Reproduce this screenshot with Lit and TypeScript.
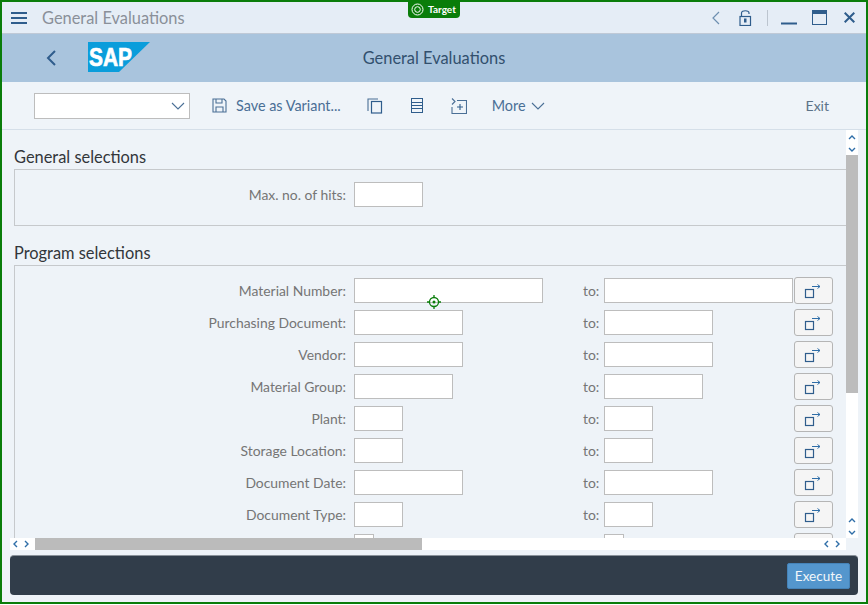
import { LitElement, html, css, svg } from "lit";
import { customElement } from "lit/decorators.js";

type FieldRow = { label: string; width: number };

const rows: FieldRow[] = [
  { label: "Material Number:", width: 189 },
  { label: "Purchasing Document:", width: 109 },
  { label: "Vendor:", width: 109 },
  { label: "Material Group:", width: 99 },
  { label: "Plant:", width: 49 },
  { label: "Storage Location:", width: 49 },
  { label: "Document Date:", width: 109 },
  { label: "Document Type:", width: 49 },
  { label: "", width: 20 },
];

const chevron = (d: string, color: string, w = 1.4) => svg`<path d=${d} fill="none" stroke=${color} stroke-width=${w} />`;

@customElement("app-root")
export class AppRoot extends LitElement {
  static styles = css`
    :host {
      display: block;
      width: 868px;
      height: 605px;
      position: relative;
      overflow: hidden;
      font-family: Lato, "Noto Sans", sans-serif;
      background: #fff;
    }
    svg {
      display: block;
    }
    .window {
      box-sizing: border-box;
      height: 604px;
      border: 2px solid #0a7d0a;
      display: flex;
      flex-direction: column;
      background: #eef3f8;
    }
    .titlebar {
      height: 31px;
      flex: none;
      display: flex;
      align-items: center;
      background: #e5edf6;
      border-bottom: 1px solid #bfc9d6;
      padding: 0 11px 0 9px;
    }
    .titlebar .name {
      margin: -1px 0 0 15px;
      font-size: 16.4px;
      color: #8a9099;
      flex: 1;
    }
    .winbtns {
      display: flex;
      align-items: center;
    }
    .sep {
      width: 1px;
      height: 16px;
      background: #bcc5cf;
    }
    .header {
      height: 48px;
      flex: none;
      background: #a9c4dd;
      display: grid;
      grid-template-columns: 1fr auto 1fr;
      align-items: center;
    }
    .header .left {
      display: flex;
      align-items: center;
      padding-left: 43px;
      gap: 31px;
    }
    .header .logo {
      margin-top: -2px;
    }
    .header .title {
      margin-top: -1px;
      font-size: 16.4px;
      color: #32506e;
    }
    .toolbar {
      height: 48px;
      flex: none;
      box-sizing: border-box;
      background: #eff4f9;
      border-bottom: 1px solid #d5dfe9;
      display: flex;
      align-items: center;
      padding: 0 37px 0 32px;
      font-size: 14.4px;
      color: #4a6f96;
    }
    .toolbar .exit {
      font-size: 14px;
      color: #5b7288;
    }
    .select {
      box-sizing: border-box;
      width: 156px;
      height: 26px;
      background: #fff;
      border: 1px solid #bdbdbd;
      display: flex;
      justify-content: flex-end;
      align-items: center;
      padding-right: 3px;
      margin-right: 22px;
    }
    .tool {
      display: flex;
      align-items: center;
      gap: 9px;
    }
    .tool.more {
      margin-left: 25px;
      gap: 5px;
    }
    .spacer {
      flex: 1;
    }
    .middle {
      flex: 1;
      min-height: 0;
      display: flex;
      padding-right: 8px;
    }
    .content {
      flex: 1;
      min-width: 0;
      overflow: hidden;
      padding-left: 12px;
      color: #757575;
      font-size: 13.9px;
    }
    .group-title {
      font-size: 16.4px;
      color: #32363a;
      height: 20px;
      line-height: 20px;
      margin: 17px 0 2px;
    }
    .box {
      border-top: 1px solid #c6c9cc;
      border-left: 1px solid #c6c9cc;
    }
    .box.general {
      height: 43px;
      border-bottom: 1px solid #c6c9cc;
      padding-top: 12px;
    }
    .box.program {
      padding-top: 12px;
    }
    .row {
      display: grid;
      grid-template-columns: 339px 229px 21px 190px 39px;
      align-items: start;
      height: 32px;
      line-height: 25px;
    }
    .label {
      text-align: right;
      padding-right: 8px;
    }
    .input {
      box-sizing: border-box;
      height: 25px;
      background: #fff;
      border: 1px solid #bdbdbd;
    }
    .more-btn {
      box-sizing: border-box;
      width: 39px;
      height: 27px;
      margin-top: -1px;
      background: #f5f5f5;
      border: 1px solid #b5b5b5;
      border-radius: 3px;
      display: flex;
      align-items: center;
      justify-content: center;
    }
    .vbar {
      width: 12px;
      flex: none;
      background: #fff;
      display: flex;
      flex-direction: column;
      align-items: center;
    }
    .vbar .arrows {
      height: 25px;
      flex: none;
      display: flex;
      align-items: center;
    }
    .vbar .thumb {
      width: 12px;
      height: 238px;
      flex: none;
      background: #bcbcbc;
    }
    .vbar .fill {
      flex: 1;
    }
    .hrow {
      height: 12px;
      flex: none;
      margin: 0 20px 0 8px;
      background: #fff;
      display: flex;
      align-items: center;
    }
    .hrow .thumb {
      width: 387px;
      height: 12px;
      background: #bbbbbb;
    }
    .hrow .arrows {
      width: 25px;
      flex: none;
    }
    .hrow .fill {
      flex: 1;
    }
    .footer {
      box-sizing: border-box;
      height: 40px;
      flex: none;
      margin: 5px 8px 7px 8px;
      background: #313d4a;
      border-radius: 4px;
      border-top: 1px solid #8a929a;
      display: flex;
      justify-content: flex-end;
      align-items: center;
      padding-right: 8px;
    }
    .execute {
      box-sizing: border-box;
      width: 63px;
      height: 26px;
      background: #5496cd;
      border: 1px solid #4583b8;
      border-radius: 2px;
      color: #f2f6fa;
      font-size: 13.5px;
      display: flex;
      align-items: center;
      justify-content: center;
    }
    .badge {
      position: absolute;
      left: 408px;
      top: 0;
      width: 52px;
      height: 18px;
      background: #0a7d0a;
      border-radius: 0 0 4px 4px;
      color: #fff;
      font-size: 10px;
      font-weight: 700;
      display: flex;
      align-items: center;
      gap: 4px;
      padding-left: 3px;
      box-sizing: border-box;
    }
    .cursor {
      position: absolute;
      left: 427px;
      top: 295px;
    }
  `;

  private arrowIcon() {
    return html`<svg width="21" height="17" viewBox="0 0 21 17">
      <rect x="2.5" y="7.5" width="8" height="8" fill="none" stroke="#2f5d8c" stroke-width="1.2" />
      <path d="M9 4.5H17M14.5 2.5L17 4.5L14.5 6.5" fill="none" stroke="#2f6ea8" stroke-width="1" />
    </svg>`;
  }

  private renderRow(r: FieldRow) {
    const w = `width:${r.width}px`;
    return html`<div class="row">
      <div class="label">${r.label}</div>
      <div class="input" style=${w}></div>
      <div>${r.label ? "to:" : ""}</div>
      <div class="input" style=${w}></div>
      <div class="more-btn">${this.arrowIcon()}</div>
    </div>`;
  }

  render() {
    return html`
      <div class="window">
        <div class="titlebar">
          <svg width="16" height="14" viewBox="0 0 16 14">
            <path d="M0 2H16M0 7H16M0 12H16" stroke="#2f5d8c" stroke-width="1.8" />
          </svg>
          <div class="name">General Evaluations</div>
          <div class="winbtns">
            <svg width="10" height="14" viewBox="0 0 10 14" style="margin-right:18px">
              ${chevron("M8 1L2 7L8 13", "#6d8fb0", 1.2)}
            </svg>
            <svg width="13" height="16" viewBox="0 0 13 16" style="margin-right:15px">
              <rect x="1" y="6.5" width="10.5" height="9" fill="none" stroke="#2f5d8c" stroke-width="1.2" />
              <path d="M2.5 6.5V3C2.5 0 10 0 10 3V4" fill="none" stroke="#2f5d8c" stroke-width="1.2" />
              <rect x="5" y="8.5" width="2.5" height="4" fill="#2f5d8c" />
            </svg>
            <div class="sep"></div>
            <svg width="16" height="14" viewBox="0 0 16 14" style="margin:0 15px 0 13px">
              <path d="M0 12.5H16" stroke="#2f5d8c" stroke-width="2" />
            </svg>
            <svg width="15" height="15" viewBox="0 0 15 15" style="margin-right:17px">
              <rect x="0.5" y="0.5" width="14" height="14" fill="none" stroke="#2f5d8c" />
              <rect x="0" y="0" width="15" height="4" fill="#2f5d8c" />
            </svg>
            <svg width="11" height="11" viewBox="0 0 11 11">
              <path d="M0.7 0.7L10.3 10.3M10.3 0.7L0.7 10.3" stroke="#2f5d8c" stroke-width="2" />
            </svg>
          </div>
        </div>

        <div class="header">
          <div class="left">
            <svg width="12" height="18" viewBox="0 0 12 18">
              ${chevron("M10 2L3 9L10 16", "#2f5d8c", 2)}
            </svg>
            <svg class="logo" width="62" height="30" viewBox="0 0 62 30">
              <polygon points="0,0 62,0 31,30 0,30" fill="#0a9ddb" />
              <text
                x="1"
                y="24"
                font-family="Liberation Sans"
                font-weight="700"
                font-size="26"
                textLength="43"
                lengthAdjust="spacingAndGlyphs"
                fill="#fff"
                stroke="#fff"
                stroke-width="0.7"
              >SAP</text>
            </svg>
          </div>
          <div class="title">General Evaluations</div>
          <div></div>
        </div>

        <div class="toolbar">
          <div class="select">
            <svg width="16" height="10" viewBox="0 0 16 10">
              ${chevron("M2 2L8 8L14 2", "#4a6f96", 1.1)}
            </svg>
          </div>
          <div class="tool">
            <svg width="15" height="15" viewBox="0 0 15 15">
              <path d="M1 1H12L14 3V14H1Z M4 1V5H10V1 M4 14V9H11V14" fill="none" stroke="#4a6f96" stroke-width="1.1" />
            </svg>
            <span>Save as Variant...</span>
          </div>
          <svg width="16" height="16" viewBox="0 0 16 16" style="margin-left:26px">
            <path d="M11 1H1V13" fill="none" stroke="#4a6f96" stroke-width="1.1" />
            <rect x="4.5" y="3.5" width="10" height="11.5" fill="none" stroke="#2f5d8c" stroke-width="1.2" />
          </svg>
          <svg width="12" height="15" viewBox="0 0 12 15" style="margin-left:28px">
            <rect x="0.5" y="0.5" width="11" height="14" fill="none" stroke="#2f5d8c" />
            <path d="M0 4.5H12M0 7.5H12M0 10.5H12" stroke="#2f5d8c" />
          </svg>
          <svg width="16" height="16" viewBox="0 0 16 16" style="margin-left:28px">
            <path d="M1 0.5L4 3.5L1 6.5 M6 2.5H15.5V15.5H1V9" fill="none" stroke="#4a6f96" stroke-width="1.1" />
            <path d="M6 9H12M9 6V12" stroke="#2f5d8c" stroke-width="1.1" />
          </svg>
          <div class="tool more">
            <span>More</span>
            <svg width="14" height="8" viewBox="0 0 14 8">
              ${chevron("M1 1L7 7L13 1", "#4a6f96", 1.1)}
            </svg>
          </div>
          <div class="spacer"></div>
          <span class="exit">Exit</span>
        </div>

        <div class="middle">
          <div class="content">
            <div class="group-title">General selections</div>
            <div class="box general">
              <div class="row">
                <div class="label">Max. no. of hits:</div>
                <div class="input" style="width:69px"></div>
              </div>
            </div>
            <div class="group-title">Program selections</div>
            <div class="box program">${rows.map((r) => this.renderRow(r))}</div>
          </div>
          <div class="vbar">
            <div class="arrows">
              <svg width="10" height="20" viewBox="0 0 10 20">
                ${chevron("M2 6L5 3L8 6", "#2f6ea8")} ${chevron("M2 15L5 18L8 15", "#2f6ea8")}
              </svg>
            </div>
            <div class="thumb"></div>
            <div class="fill"></div>
            <div class="arrows">
              <svg width="10" height="20" viewBox="0 0 10 20">
                ${chevron("M2 6L5 3L8 6", "#2f6ea8")} ${chevron("M2 15L5 18L8 15", "#2f6ea8")}
              </svg>
            </div>
          </div>
        </div>

        <div class="hrow">
          <div class="arrows">
            <svg width="25" height="12" viewBox="0 0 25 12">
              ${chevron("M7 3L4 6L7 9", "#2f6ea8")} ${chevron("M15 3L18 6L15 9", "#2f6ea8")}
            </svg>
          </div>
          <div class="thumb"></div>
          <div class="fill"></div>
          <div class="arrows">
            <svg width="25" height="12" viewBox="0 0 25 12">
              ${chevron("M7 3L4 6L7 9", "#2f6ea8")} ${chevron("M15 3L18 6L15 9", "#2f6ea8")}
            </svg>
          </div>
        </div>

        <div class="footer">
          <div class="execute">Execute</div>
        </div>
      </div>

      <div class="badge">
        <svg width="13" height="13" viewBox="0 0 13 13">
          <circle cx="6.5" cy="6.5" r="5.5" fill="none" stroke="#fff" />
          <circle cx="6.5" cy="6.5" r="2.8" fill="none" stroke="#fff" />
        </svg>
        <span>Target</span>
      </div>

      <svg class="cursor" width="14" height="14" viewBox="0 0 14 14">
        <circle cx="7" cy="7" r="4.5" fill="none" stroke="#0a7d0a" stroke-width="1.3" />
        <circle cx="7" cy="7" r="1.5" fill="#0a7d0a" />
        <path d="M7 0V2.5M7 11.5V14M0 7H2.5M11.5 7H14" stroke="#0a7d0a" stroke-width="1.3" />
      </svg>
    `;
  }
}
